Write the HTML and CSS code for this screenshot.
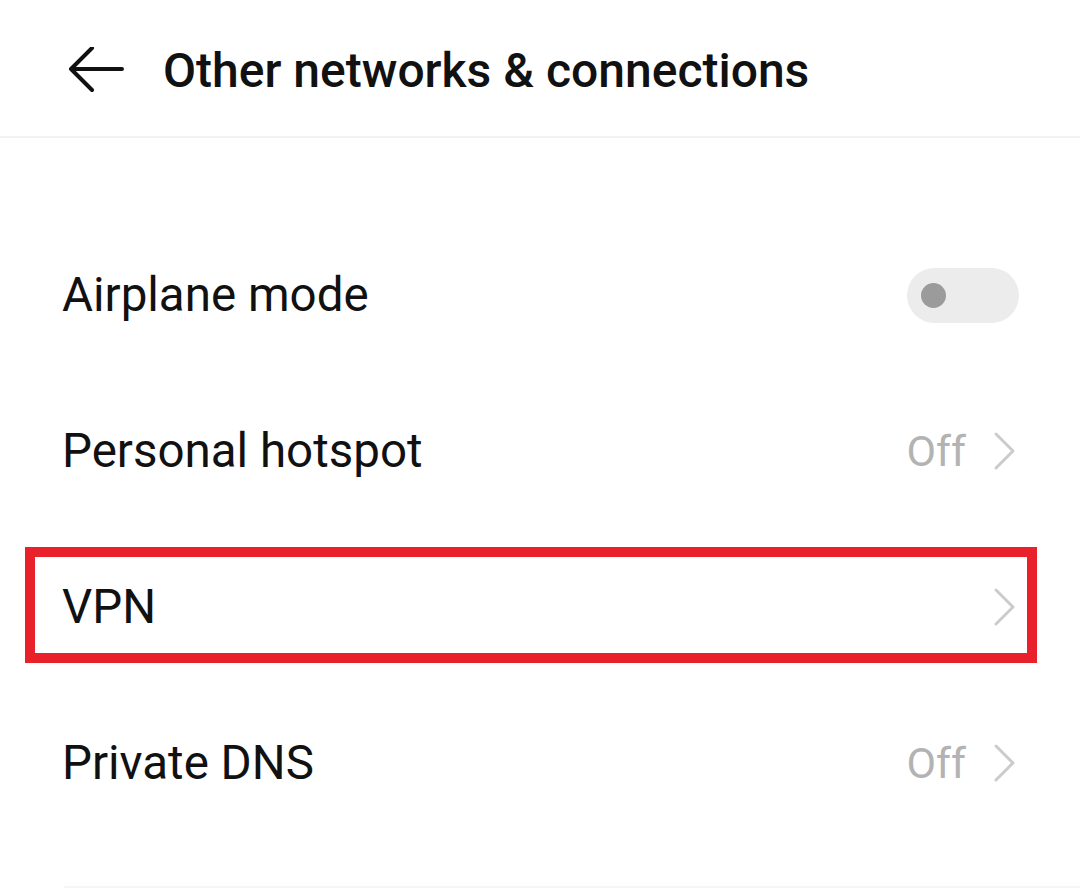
FILE: index.html
```html
<!DOCTYPE html>
<html lang="en">
<head>
    <meta charset="UTF-8">
    <meta name="viewport" content="width=device-width, initial-scale=1.0">
    <title>Other networks &amp; connections</title>
    <link rel="stylesheet" href="styles.css">
</head>
<body>
    <div class="screen">
        <div class="header">
            <svg class="back" width="56" height="48" viewBox="0 0 56 48">
                <path d="M54 22 H3 M24 1 L3 22 L24 43" fill="none" stroke="#111" stroke-width="4" stroke-linecap="round" stroke-linejoin="round"/>
            </svg>
            <h1>Other networks &amp; connections</h1>
        </div>

        <div class="list">
            <div class="row">
                <span class="label">Airplane mode</span>
                <span class="toggle"><span class="knob"></span></span>
            </div>
            <div class="row">
                <span class="label">Personal hotspot</span>
                <span class="value">Off</span>
                <svg class="chevron" width="24" height="40" viewBox="0 0 24 40">
                    <path d="M3 3 L20 20 L3 37" fill="none" stroke="#cbcbcb" stroke-width="3" stroke-linecap="round" stroke-linejoin="round"/>
                </svg>
            </div>
            <div class="row highlight">
                <span class="label">VPN</span>
                <svg class="chevron" width="24" height="40" viewBox="0 0 24 40">
                    <path d="M3 3 L20 20 L3 37" fill="none" stroke="#cbcbcb" stroke-width="3" stroke-linecap="round" stroke-linejoin="round"/>
                </svg>
            </div>
            <div class="row">
                <span class="label">Private DNS</span>
                <span class="value">Off</span>
                <svg class="chevron" width="24" height="40" viewBox="0 0 24 40">
                    <path d="M3 3 L20 20 L3 37" fill="none" stroke="#cbcbcb" stroke-width="3" stroke-linecap="round" stroke-linejoin="round"/>
                </svg>
            </div>
        </div>
        <div class="divider"></div>
    </div>
</body>
</html>
```
FILE: styles.css
```css
body {
    margin: 0;
    padding: 0;
    background-color: #fff;
    font-family: Roboto, "Liberation Sans", sans-serif;
    color: #111;
}
.screen {
    width: 1080px;
    height: 891px;
    overflow: hidden;
}
.header {
    height: 138px;
    display: flex;
    align-items: center;
    padding-left: 68px;
    border-bottom: 2px solid #f2f2f2;
    box-sizing: border-box;
}
.back {
    flex: none;
    margin-right: 39px;
    margin-top: 6px;
}
h1 {
    margin: 4px 0 0 0;
    font-size: 48px;
    font-weight: 500;
    color: #111;
}
.list {
    padding-top: 79px;
}
.row {
    position: relative;
    height: 156px;
    display: flex;
    align-items: center;
    padding-left: 62px;
    padding-right: 63px;
}
.label {
    flex: 1;
    font-size: 47.5px;
}
.value {
    font-size: 43px;
    color: #b3b3b3;
    margin-right: 27px;
}
.chevron {
    flex: none;
}
.toggle {
    width: 112px;
    height: 55px;
    margin-right: -2px;
    border-radius: 28px;
    background-color: #ececec;
    display: flex;
    align-items: center;
    padding-left: 14px;
    box-sizing: border-box;
}
.knob {
    width: 25px;
    height: 25px;
    border-radius: 50%;
    background-color: #9b9b9b;
}
.highlight::after {
    content: "";
    position: absolute;
    top: 18px;
    left: 25px;
    right: 43px;
    bottom: 22px;
    border: 10px solid #e8212b;
}
.divider {
    margin-top: 45px;
    margin-left: 64px;
    height: 2px;
    background-color: #f6f6f6;
}
```
